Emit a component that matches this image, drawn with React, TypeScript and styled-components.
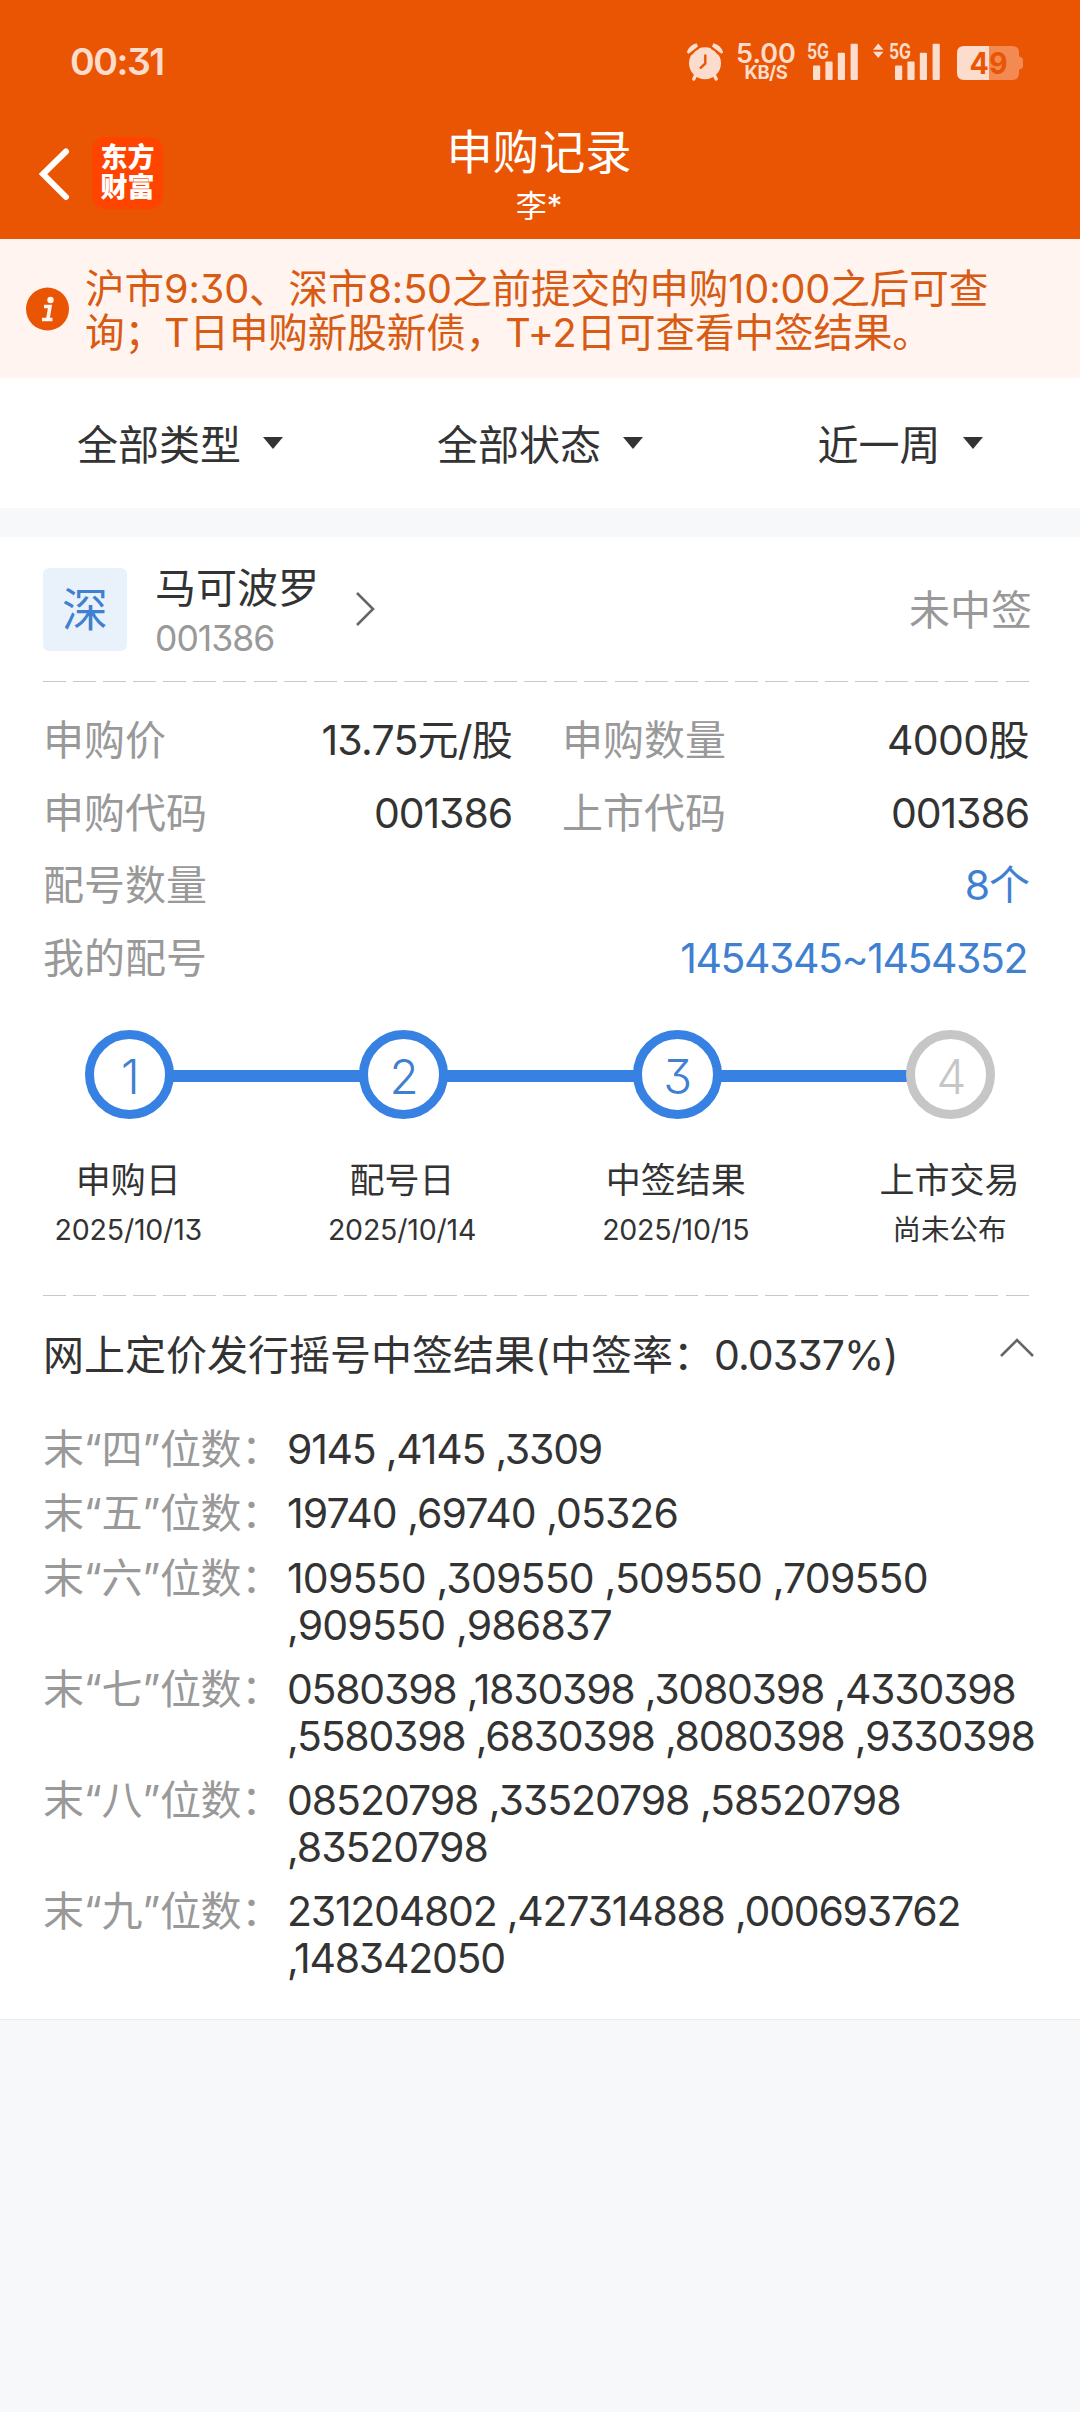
import React from 'react';
import styled, { createGlobalStyle } from 'styled-components';

const ORANGE = '#ea5504';
const STATUS = '#fcdccd';
const BLUE = '#3681e1';

const GlobalStyle = createGlobalStyle`
  * { box-sizing: border-box; }
  html, body { margin: 0; padding: 0; background: #f7f8fa; }
  body {
    font-family: Inter, "Noto Sans CJK SC", sans-serif;
    font-feature-settings: "cv09" 1;
    color: #333;
    -webkit-font-smoothing: antialiased;
  }
`;

const Page = styled.div`
  width: 1080px;
  height: 2412px;
  overflow: hidden;
  background: #f7f8fa;
  display: flex;
  flex-direction: column;
`;

const Text = styled.span<{ $size?: number; $color?: string; $ls?: number; $weight?: number; $lh?: number }>`
  display: block;
  white-space: pre;
  font-size: ${(p) => p.$size ?? 41}px;
  line-height: ${(p) => p.$lh ?? 48}px;
  color: ${(p) => p.$color ?? '#333'};
  letter-spacing: ${(p) => p.$ls ?? 0}px;
  font-weight: ${(p) => p.$weight ?? 400};
`;

const Tight = styled.span`
  letter-spacing: -0.9px;
`;

const Header = styled.header`
  height: 239px;
  background: ${ORANGE};
  flex: none;
`;

const StatusBar = styled.div`
  height: 123px;
  padding: 0 57px 0 70px;
  display: flex;
  align-items: center;
  justify-content: space-between;
`;

const NavBar = styled.div`
  display: grid;
  grid-template-columns: 200px 1fr 200px;
  height: 116px;
`;

const NavLeft = styled.div`
  display: flex;
  align-items: flex-start;
  gap: 22px;
  padding: 14px 0 0 38px;
`;

const BackIcon = styled.svg`
  width: 32px;
  height: 72px;
  display: block;
`;

const Logo = styled.div`
  width: 71px;
  height: 72px;
  border-radius: 13px;
  background: #ff4400;
  display: flex;
  flex-direction: column;
  align-items: center;
  padding-top: 6px;
`;

const TitleBlock = styled.div`
  display: flex;
  flex-direction: column;
  align-items: center;
  padding-right: 2px;
`;

const Notice = styled.section`
  height: 139px;
  flex: none;
  background: #fff4ef;
  display: flex;
  align-items: center;
  gap: 15px;
  padding-left: 26px;
`;

const NoticeText = styled(Text)`
  margin-top: 5px;
`;

const Filters = styled.nav`
  height: 130px;
  flex: none;
  background: #fff;
  display: grid;
  grid-template-columns: repeat(3, 1fr);
`;

const Filter = styled.button`
  all: unset;
  display: flex;
  align-items: center;
  justify-content: center;
  gap: 22px;
`;

const FilterLabel = styled(Text)`
  margin-top: 3px;
`;

const Caret = styled.span`
  border: 10.5px solid transparent;
  border-top: 12px solid #333;
  border-bottom: 0;
`;

const Card = styled.main`
  margin-top: 29px;
  height: 1483px;
  flex: none;
  background: #fff;
  border-bottom: 1px solid #ececee;
  padding: 0 43px;
`;

const StockRow = styled.div`
  height: 144px;
  padding-right: 5px;
  display: flex;
  align-items: center;
`;

const Market = styled.div`
  width: 84px;
  height: 83px;
  border-radius: 6px;
  background: #e9f2fb;
  display: flex;
  align-items: center;
  justify-content: center;
`;

const StockName = styled.div`
  display: flex;
  flex-direction: column;
  gap: 3px;
  margin-left: 28px;
  padding-top: 9px;
`;

const Chevron = styled.svg<{ $w: number; $h: number }>`
  width: ${(p) => p.$w}px;
  height: ${(p) => p.$h}px;
  flex: none;
  fill: none;
  stroke: #666;
  stroke-width: 2.6;
`;

const OpenArrow = styled(Chevron)`
  margin-left: 36px;
`;

const FoldArrow = styled(Chevron)`
  margin-bottom: 14px;
`;

const Verdict = styled(Text)`
  margin: 2px 0 0 auto;
`;

const Dashes = styled.div`
  width: 986px;
  height: 1px;
  background: repeating-linear-gradient(90deg, #c8c8c8 0 23px, transparent 23px 30.08px);
`;

const Fields = styled.div`
  padding-top: 22px;
  display: grid;
  grid-template-columns: 469px 467px;
  column-gap: 50px;
  grid-auto-rows: 72.6px;
`;

const Field = styled.div<{ $wide?: boolean }>`
  grid-column: ${(p) => (p.$wide ? '1 / -1' : 'auto')};
  display: flex;
  align-items: center;
  justify-content: space-between;
`;

const RangeText = styled(Text)`
  margin-right: 2px;
`;

const Steps = styled.ol`
  list-style: none;
  margin: 0 0 0 -50px;
  padding: 36px 0 0;
  height: 301px;
  display: grid;
  grid-template-columns: repeat(4, 273.7px);
`;

const Step = styled.li`
  display: flex;
  flex-direction: column;
  align-items: center;
`;

const StepInfo = styled.div`
  margin: 36px 3px 0 0;
  display: flex;
  flex-direction: column;
  align-items: center;
`;

const Track = styled.div`
  width: 100%;
  height: 89px;
  display: flex;
  align-items: center;
`;

const Rail = styled.div<{ $on: boolean }>`
  flex: 1;
  height: 12px;
  margin: 3px -2px 0;
  background: ${(p) => (p.$on ? BLUE : 'transparent')};
`;

const Ring = styled.div<{ $color: string }>`
  width: 89px;
  height: 89px;
  border-radius: 50%;
  border: 9px solid ${(p) => p.$color};
  background: #fff;
  z-index: 1;
  display: flex;
  align-items: center;
  justify-content: center;
  padding: 4px 0 0 1px;
`;

const ResultHead = styled.div`
  height: 118px;
  display: flex;
  align-items: center;
  justify-content: space-between;
  padding-right: 3px;
`;

const Results = styled.dl`
  margin: 0;
  padding-top: 12px;
  display: flex;
  flex-direction: column;
  gap: 17px;
`;

const ResultRow = styled.div`
  display: grid;
  grid-template-columns: 244px 1fr;
`;

const SignalSvg = styled.svg`
  display: block;
  overflow: visible;
`;

const Signal: React.FC<{ arrows?: boolean }> = ({ arrows }) => (
  <SignalSvg width={arrows ? 68 : 52} height="38" viewBox={arrows ? '0 0 68 38' : '16 0 52 38'}>
    {arrows && <path d="M5.2 0.5 L10.5 6.8 H0 Z M5.2 15 L10.5 8.8 H0 Z" fill={STATUS} />}
    <text x="16" y="16" fontSize="21" fontWeight="700" textLength="22" lengthAdjust="spacingAndGlyphs" fill={STATUS}>5G</text>
    <rect x="22" y="22.5" width="7.2" height="14.5" rx="1" fill={STATUS} />
    <rect x="34.4" y="18.5" width="7.2" height="18.5" rx="1" fill={STATUS} />
    <rect x="46.8" y="9.8" width="7.2" height="27.2" rx="1" fill={STATUS} />
    <rect x="59.6" y="0.8" width="7.2" height="36.2" rx="1" fill={STATUS} />
  </SignalSvg>
);

const StatusIcons = styled.div`
  display: flex;
  align-items: flex-start;
  height: 38px;
  margin-top: 1px;
`;

const Speed = styled.div`
  width: 60px;
  margin: 0 11px 0 12px;
  display: flex;
  flex-direction: column;
  align-items: center;
`;

const SignalGap = styled.div<{ $w: number }>`
  width: ${(p) => p.$w}px;
`;

const fields: [string, string, number][] = [
  ['申购价', '13.75元/股', -0.8],
  ['申购数量', '4000股', -0.6],
  ['申购代码', '001386', -1.1],
  ['上市代码', '001386', -1.1],
];

const steps = [
  { name: '申购日', date: '2025/10/13', done: true },
  { name: '配号日', date: '2025/10/14', done: true },
  { name: '中签结果', date: '2025/10/15', done: true },
  { name: '上市交易', date: '尚未公布', done: false },
];

const results: [string, string, number][] = [
  ['四', '9145 ,4145 ,3309', -1.25],
  ['五', '19740 ,69740 ,05326', -0.95],
  ['六', '109550 ,309550 ,509550 ,709550\n,909550 ,986837', -0.82],
  ['七', '0580398 ,1830398 ,3080398 ,4330398\n,5580398 ,6830398 ,8080398 ,9330398', -1.26],
  ['八', '08520798 ,33520798 ,58520798\n,83520798', -1.06],
  ['九', '231204802 ,427314888 ,000693762\n,148342050', -1.25],
];

export default function App() {
  return (
    <Page>
      <GlobalStyle />
      <Header>
        <StatusBar>
          <Text $size={37.5} $weight={600} $ls={-1.5} $color={STATUS}>00:31</Text>
          <StatusIcons>
            <svg width="38" height="38" viewBox="0 0 38 38">
              <circle cx="19" cy="20.3" r="16" fill={STATUS} />
              <path d="M2.6 9.5 A18 18 0 0 1 11.5 2" stroke={ORANGE} strokeWidth="8.5" fill="none" />
              <path d="M35.4 9.5 A18 18 0 0 0 26.5 2" stroke={ORANGE} strokeWidth="8.5" fill="none" />
              <path d="M0.8 9.3 Q3 2 10.6 0.2 L12 3.4 L2.6 10.8 Z M37.2 9.3 Q35 2 27.4 0.2 L26 3.4 L35.4 10.8 Z" fill={STATUS} />
              <path d="M9.5 32.5 L7.8 36 M28.5 32.5 L30.2 36" stroke={STATUS} strokeWidth="3.4" strokeLinecap="round" />
              <path d="M19.3 12.5 V20.5 L14.6 24.8" stroke={ORANGE} strokeWidth="2.4" fill="none" strokeLinecap="round" />
            </svg>
            <Speed>
              <Text $size={27} $lh={21} $weight={600} $color={STATUS}>5.00</Text>
              <Text $size={18.5} $lh={17} $weight={700} $ls={-0.5} $color={STATUS}>KB/S</Text>
            </Speed>
            <Signal />
            <SignalGap $w={14} />
            <Signal arrows />
            <SignalGap $w={15} />
            <svg width="67" height="38" viewBox="0 0 67 38">
              <path d="M33 3 H8 Q1 3 1 10 V30 Q1 37 8 37 H33 Z" fill={STATUS} />
              <path d="M33 3 H56 Q63 3 63 10 V13.5 Q67 14 67 17 V23 Q67 26 63 26.5 V30 Q63 37 56 37 H33 Z" fill="#f38a52" />
              <text x="13.5" y="31" fontSize="30" fontWeight="700" textLength="38" lengthAdjust="spacingAndGlyphs" fill={ORANGE}>49</text>
            </svg>
          </StatusIcons>
        </StatusBar>
        <NavBar>
          <NavLeft>
            <BackIcon viewBox="0 0 32 72">
              <path d="M28 14.5 L5 37 L28 60" fill="none" stroke="#fff" strokeWidth="6" strokeLinecap="round" />
            </BackIcon>
            <Logo>
              <Text $size={27} $lh={30} $weight={900} $color="#fff">东方</Text>
              <Text $size={27} $lh={30} $weight={900} $color="#fff">财富</Text>
            </Logo>
          </NavLeft>
          <TitleBlock>
            <Text $size={46.3} $lh={58} $color="#fff">申购记录</Text>
            <Text $size={31} $lh={50} $color="#fff">李*</Text>
          </TitleBlock>
        </NavBar>
      </Header>

      <Notice>
        <svg width="44" height="44" viewBox="0 0 44 44">
          <circle cx="21.5" cy="22" r="21.5" fill={ORANGE} />
          <circle cx="24.5" cy="13" r="3.2" fill="#fff4ef" />
          <path d="M18 19.5 H24 L21.8 32.5 M16 32.5 H26.5" fill="none" stroke="#fff4ef" strokeWidth="3.6" />
        </svg>
        <NoticeText $size={39.6} $lh={44} $ls={-0.1} $color="#d85b14">{'沪市9:30、深市8:50之前提交的申购10:00之后可查\n询；T日申购新股新债，T+2日可查看中签结果。'}</NoticeText>
      </Notice>

      <Filters>
        {['全部类型', '全部状态', '近一周'].map((f) => (
          <Filter key={f}><FilterLabel>{f}</FilterLabel><Caret /></Filter>
        ))}
      </Filters>

      <Card>
        <StockRow>
          <Market><Text $size={46} $color="#3f80d0">深</Text></Market>
          <StockName>
            <Text $size={41}>马可波罗</Text>
            <Text $size={35.5} $ls={-1} $color="#999">001386</Text>
          </StockName>
          <OpenArrow $w={24} $h={36} viewBox="0 0 24 36"><path d="M2 2 L18 18 L2 34" /></OpenArrow>
          <Verdict $color="#999">未中签</Verdict>
        </StockRow>
        <Dashes />
        <Fields>
          {fields.map(([k, v, ls]) => (
            <Field key={k}><Text $color="#999">{k}</Text><Text $ls={ls}>{v}</Text></Field>
          ))}
          <Field $wide><Text $color="#999">配号数量</Text><Text $ls={-1} $color="#3f80d0">8个</Text></Field>
          <Field $wide><Text $color="#999">我的配号</Text><RangeText $ls={-1.45} $color="#3f80d0">1454345~1454352</RangeText></Field>
        </Fields>
        <Steps>
          {steps.map((s, i) => (
            <Step key={s.name}>
              <Track>
                <Rail $on={i > 0} />
                <Ring $color={s.done ? BLUE : '#c6c6c6'}>
                  <Text $size={47.5} $weight={300} $color={s.done ? '#3f80d0' : '#c6c6c6'}>{i + 1}</Text>
                </Ring>
                <Rail $on={i < 3} />
              </Track>
              <StepInfo>
                <Text $size={35} $lh={50}>{s.name}</Text>
                <Text $size={28.5} $lh={50} $ls={s.done ? -0.2 : 0}>{s.date}</Text>
              </StepInfo>
            </Step>
          ))}
        </Steps>
        <Dashes />
        <ResultHead>
          <Text>网上定价发行摇号中签结果(中签率：<Tight>0.0337%)</Tight></Text>
          <FoldArrow $w={34} $h={20} viewBox="0 0 34 20"><path d="M1 18 L17 2 L33 18" /></FoldArrow>
        </ResultHead>
        <Results>
          {results.map(([k, v, ls]) => (
            <ResultRow key={k}>
              <Text $lh={47.1} $ls={-0.3} $color="#999">{`末“${k}”位数：`}</Text>
              <Text $lh={47.1} $ls={ls}>{v}</Text>
            </ResultRow>
          ))}
        </Results>
      </Card>
    </Page>
  );
}
